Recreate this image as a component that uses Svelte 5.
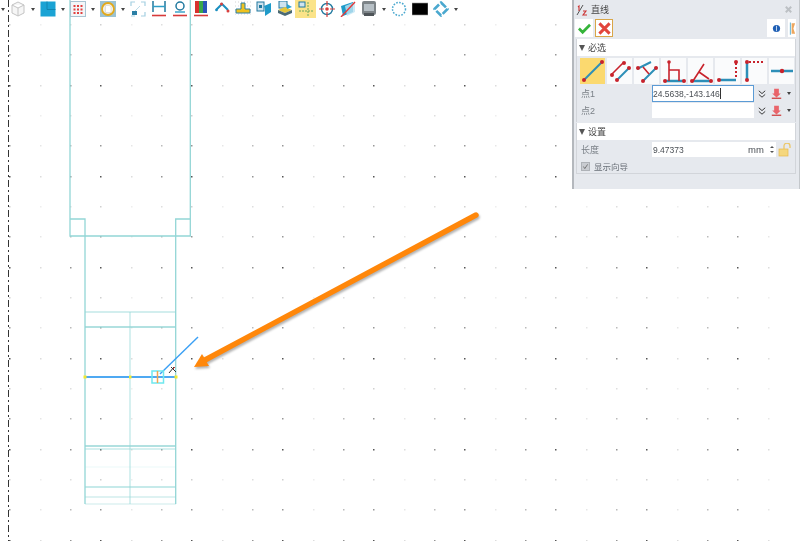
<script>
  // grid of the sketch plane, three dot strengths per row and column
  const STEP = 30.33;
  const dots = [];
  for (let j = 0; j < 18; j++) {
    for (let k = 0; k < 26; k++) {
      const col = [0.75, 0.1, 0.45][k % 3];
      const row = [0.95, 0.2, 0.55][(j + 1) % 3];
      dots.push({ x: Math.round(9.3 + k * STEP), y: Math.round(24 + j * STEP), o: col * row + 0.06 });
    }
  }

  // horizontal rules of the lower body: y, strength
  const rules = [
    [312, 0.55],
    [327, 0.95],
    [446, 0.95],
    [449, 0.5],
    [467, 0.12],
    [487, 0.7],
    [497, 0.4],
    [504, 0.3],
  ];
</script>

{#snippet caret()}
  <span class="caret"></span>
{/snippet}

{#snippet pick()}
  <svg class="pick" viewBox="0 0 14 14">
    <path d="M4 1v6H1.500L7 12l5.500-5H10V1z" fill="#e9656b" />
    <path d="M1 13h12" stroke="#c22" stroke-width="1.400" />
  </svg>
{/snippet}

{#snippet dbl()}
  <svg class="dbl" viewBox="0 0 10 10">
    <path d="M1 1l4 3.500L9 1M1 5.500L5 9l4-3.500" fill="none" stroke="#333" stroke-width="1.200" />
  </svg>
{/snippet}

<div class="screen">
  <svg class="sketch" width="802" height="541" viewBox="0 0 802 541">
    {#each dots as d}
      <rect x={d.x} y={d.y} width="1.500" height="1.500" fill="#222" opacity={d.o} />
    {/each}

    <path d="M8.500 0V541" stroke="#333" stroke-width="1" stroke-dasharray="7 3 2 3" />

    <g fill="none" stroke="#93d6d6" stroke-width="1.300">
      <path d="M70 0V236H190.300V0" />
      <path d="M70 219H85V504M190.300 219H175.700V504" />
    </g>
    <path d="M130 312V504" stroke="#93d6d6" stroke-width="1.500" opacity="0.5" />
    {#each rules as [y, o]}
      <path d="M85 {y}H176" stroke="#93d6d6" stroke-width="1.300" opacity={o} />
    {/each}

    <path d="M85 377H176" stroke="#4fa9f2" stroke-width="2" />
    <path d="M160 374L198 337" stroke="#3aa0f5" stroke-width="1.400" />
    <rect x="152" y="371" width="11.500" height="12" fill="none" stroke="#6fe8ee" stroke-width="1.500" />
    <path d="M157.500 371V383" stroke="#f2a652" stroke-width="1.500" />
    <rect x="83.500" y="375.500" width="3" height="3" fill="#f2ea2e" />
    <rect x="129" y="375.500" width="2.500" height="3" fill="#f2ea2e" />
    <rect x="174.500" y="375.500" width="3" height="3" fill="#f2ea2e" />
    <path d="M169 373L174 367M171 367L176 372" stroke="#333" stroke-width="1" />
    <path d="M173 369L175 367" stroke="#c33" stroke-width="1" />

    <g class="arrow">
      <path d="M476 215L205 360" stroke="#ff870a" stroke-width="5.400" stroke-linecap="round" />
      <path d="M194 367L202 354L209 366Z" fill="#ff870a" />
    </g>
  </svg>

  <div class="toolbar">
    <span class="caret first"></span>
    <span class="tool">
      <svg viewBox="0 0 16 16"><path d="M8 1l6 3v8l-6 3-6-3V4zM2 4l6 3 6-3M8 7v8" fill="#f6f6f6" stroke="#c4c4c4" stroke-width="1" /></svg>
    </span>
    {@render caret()}
    <span class="tool">
      <svg viewBox="0 0 16 16"><rect x="0.500" y="0.500" width="15" height="15" fill="#1ba3d4" /><path d="M7 0.500v8h8.500" fill="none" stroke="#0f7ea8" stroke-width="0.800" /></svg>
    </span>
    {@render caret()}
    <span class="tool">
      <svg viewBox="0 0 16 16">
        <rect x="0.500" y="0.500" width="15" height="15" fill="#f3f6f8" stroke="#a9c4d2" />
        <path d="M3.500 4h2v2h-2zM7 4h2v2H7zM10.500 4h2v2h-2zM3.500 7.500h2v2h-2zM7 7.500h2v2H7zM10.500 7.500h2v2h-2zM3.500 11h2v2h-2zM7 11h2v2H7zM10.500 11h2v2h-2z" fill="#e2403f" />
      </svg>
    </span>
    {@render caret()}
    <span class="tool">
      <svg viewBox="0 0 16 16">
        <rect x="0" y="0" width="16" height="16" fill="#9cc3d3" />
        <circle cx="8" cy="8" r="6" fill="#f3f0e4" stroke="#e2a91c" stroke-width="1.800" />
        <path d="M5.500 4.500h4l1.500 2v5H5.500z" fill="#fff" stroke="#c9c9c9" stroke-width="0.500" />
      </svg>
    </span>
    {@render caret()}
    <span class="tool">
      <svg viewBox="0 0 16 16">
        <path d="M1 5V1h4M11 1h4v4M15 11v4h-4M5 15H1" fill="none" stroke="#a5d0e2" stroke-width="1.200" />
        <rect x="2" y="10" width="5" height="4" fill="#2a7fa5" />
        <path d="M5 10l5-5" stroke="#bcdbe8" stroke-width="1" />
      </svg>
    </span>
    <span class="tool wide">
      <svg viewBox="0 0 16 16">
        <path d="M2 0v11M14 0v11" stroke="#20799f" stroke-width="1.500" />
        <path d="M2 5.500h12" stroke="#2e9ec6" stroke-width="1.500" />
        <path d="M1 14.500h14" stroke="#d73a3a" stroke-width="1.600" />
      </svg>
    </span>
    <span class="tool wide">
      <svg viewBox="0 0 16 16">
        <circle cx="8" cy="5" r="4" fill="none" stroke="#20799f" stroke-width="1.500" />
        <path d="M3 11h10" stroke="#2e9ec6" stroke-width="1.400" />
        <path d="M1 14.500h14" stroke="#d73a3a" stroke-width="1.600" />
      </svg>
    </span>
    <span class="tool wide">
      <svg viewBox="0 0 16 16">
        <rect x="2" y="0" width="4" height="12" fill="#d8322e" />
        <rect x="6" y="0" width="4" height="12" fill="#3aa64a" />
        <rect x="10" y="0" width="4" height="12" fill="#2b54b8" />
        <path d="M1 14.500h14" stroke="#d73a3a" stroke-width="1.600" />
      </svg>
    </span>
    <span class="tool wide">
      <svg viewBox="0 0 16 16">
        <path d="M2 9l6-6 6 6" fill="none" stroke="#1c8fc0" stroke-width="2" />
        <circle cx="7.500" cy="3" r="1.500" fill="#d9403e" />
        <circle cx="2.500" cy="9" r="1.300" fill="#1c8fc0" />
        <circle cx="14" cy="10" r="1.500" fill="#d9403e" />
      </svg>
    </span>
    <span class="tool wide">
      <svg viewBox="0 0 16 16">
        <path d="M0 1h16M0 5h16M0 9h16M0 13h16" stroke="#c9c9c9" stroke-width="0.800" stroke-dasharray="1 2" />
        <path d="M6 2h4v6h5v4H1V8h5z" fill="#efc21f" stroke="#2a7fa5" stroke-width="1" />
      </svg>
    </span>
    <span class="tool wide">
      <svg viewBox="0 0 16 16">
        <rect x="1" y="1" width="7" height="9" fill="#cfe3ee" stroke="#20799f" />
        <path d="M8 5l7-3v9l-6 4V8z" fill="#1f9bc9" />
        <path d="M3 4h3v3H3z" fill="#20799f" />
      </svg>
    </span>
    <span class="tool wide">
      <svg viewBox="0 0 16 16">
        <rect x="2" y="0" width="8" height="7" fill="#cfe3ee" stroke="#20799f" />
        <path d="M1 9l7-3 7 3-7 3z" fill="#e4c63a" />
        <path d="M1 9v3l7 3 7-3V9l-7 3z" fill="#4b6a75" />
        <path d="M10 3l5 3-5 2z" fill="#2aa3d0" />
      </svg>
    </span>
    <span class="tool wide active">
      <svg viewBox="0 0 16 16">
        <rect x="1" y="1" width="6" height="5" fill="#cfe3ee" stroke="#20799f" />
        <path d="M10 1v15M1 10h15" stroke="#6aa860" stroke-width="1" stroke-dasharray="2 1" />
      </svg>
    </span>
    <span class="tool wide">
      <svg viewBox="0 0 16 16">
        <circle cx="8" cy="8" r="5.500" fill="none" stroke="#20799f" stroke-width="1.400" />
        <circle cx="8" cy="8" r="1.800" fill="#d9403e" />
        <path d="M8 0v5M8 11v5M0 8h5M11 8h5" stroke="#d9403e" stroke-width="1.200" />
      </svg>
    </span>
    <span class="tool wide">
      <svg viewBox="0 0 16 16">
        <path d="M1 5l12-4v10L3 15z" fill="#1f9bc9" />
        <path d="M5 5l10-4v10L7 15z" fill="#bfe4f2" opacity="0.800" />
        <path d="M1 16L15 1" stroke="#e23a3a" stroke-width="1.400" />
      </svg>
    </span>
    <span class="tool wide">
      <svg viewBox="0 0 16 16">
        <rect x="1" y="0" width="14" height="14" rx="2" fill="#7d8488" />
        <rect x="3" y="3" width="10" height="7" fill="#b7c0c6" />
        <rect x="3" y="12" width="10" height="3" fill="#4f5559" />
      </svg>
    </span>
    {@render caret()}
    <span class="tool">
      <svg viewBox="0 0 16 16"><circle cx="8" cy="8" r="6.500" fill="none" stroke="#4aa8cf" stroke-width="1.500" stroke-dasharray="1.600 1.400" /></svg>
    </span>
    <span class="tool wide">
      <svg viewBox="0 0 16 16"><rect x="0" y="2" width="16" height="12" fill="#000" stroke="#999" stroke-width="0.600" /></svg>
    </span>
    <span class="tool wide">
      <svg viewBox="0 0 16 16">
        <path d="M8 1.500L14.500 8 8 14.500 1.500 8z" fill="none" stroke="#4aa8cf" stroke-width="2.600" stroke-linejoin="round" stroke-dasharray="7 2" />
      </svg>
    </span>
    {@render caret()}
  </div>

  <aside class="panel">
    <header class="title">
      <svg class="logo" viewBox="0 0 12 12">
        <path d="M1 11L7 1" stroke="#555" stroke-width="1" />
        <path d="M2 3l1-1v5M7 7h3L7 11h4" fill="none" stroke="#c33" stroke-width="1.100" />
      </svg>
      <span class="name">直线</span>
      <svg class="close" viewBox="0 0 10 10">
        <path d="M2 2l6 6M8 2l-6 6" stroke="#bcc0c4" stroke-width="2.200" />
      </svg>
    </header>

    <div class="actions">
      <button class="act">
        <svg viewBox="0 0 14 14"><path d="M1 7l4 4 8-8" fill="none" stroke="#35b43a" stroke-width="3" /></svg>
      </button>
      <button class="act cancel">
        <svg viewBox="0 0 14 14"><path d="M1.500 1.500l11 11M12.500 1.500l-11 11" stroke="#e2453c" stroke-width="3.200" /></svg>
      </button>
      <span class="spacer"></span>
      <button class="act info">
        <svg viewBox="0 0 10 10"><circle cx="5" cy="5" r="4" fill="#1f5fb4" /><path d="M5 2v6" stroke="#cfe0f5" stroke-width="1" /></svg>
      </button>
      <button class="act book">
        <svg viewBox="0 0 8 14"><path d="M1 0h1v14H1z" fill="#4aa8cf" /><path d="M3 1h4l-2 6 2 6H3z" fill="#eda75f" /></svg>
      </button>
    </div>

    <section class="group">
      <h3><i></i>必选</h3>
      <div class="modes">
        <span class="mode on">
          <svg viewBox="0 0 24 24"><path d="M3 21L21 3" stroke="#2d8fb8" stroke-width="2" /><circle cx="3" cy="21" r="2" fill="#c8232c" /><circle cx="21" cy="3" r="2" fill="#c8232c" /></svg>
        </span>
        <span class="mode">
          <svg viewBox="0 0 24 24"><path d="M3 16L15 4" stroke="#c8232c" stroke-width="1.600" /><path d="M9 21L21 9" stroke="#2d8fb8" stroke-width="2" /><circle cx="4" cy="16" r="2" fill="#c8232c" /><circle cx="16" cy="4" r="2" fill="#c8232c" /><circle cx="9" cy="21" r="2" fill="#c8232c" /><circle cx="21" cy="9" r="2" fill="#c8232c" /></svg>
        </span>
        <span class="mode">
          <svg viewBox="0 0 24 24"><path d="M2 10L16 3M8 22L22 8" stroke="#2d8fb8" stroke-width="2" /><path d="M8 8l6 7" stroke="#c8232c" stroke-width="1.600" /><circle cx="8" cy="22" r="2" fill="#c8232c" /><circle cx="21" cy="9" r="2" fill="#c8232c" /><circle cx="3" cy="9" r="2" fill="#c8232c" /></svg>
        </span>
        <span class="mode">
          <svg viewBox="0 0 24 24"><path d="M3 22H22" stroke="#2d8fb8" stroke-width="2.500" /><path d="M7 22V3M7 11H17V22" fill="none" stroke="#c8232c" stroke-width="1.600" /><circle cx="7" cy="3" r="1.800" fill="#c8232c" /><circle cx="3" cy="22" r="2" fill="#c8232c" /><circle cx="22" cy="22" r="2" fill="#c8232c" /></svg>
        </span>
        <span class="mode">
          <svg viewBox="0 0 24 24"><path d="M3 22H22" stroke="#2d8fb8" stroke-width="2.500" /><path d="M4 22L15 5M10 13L20 20" fill="none" stroke="#c8232c" stroke-width="1.600" /><circle cx="3" cy="22" r="2" fill="#c8232c" /><circle cx="22" cy="22" r="2" fill="#c8232c" /></svg>
        </span>
        <span class="mode">
          <svg viewBox="0 0 24 24"><path d="M3 21H20" stroke="#2d8fb8" stroke-width="2.500" /><path d="M20 4V18" stroke="#c8232c" stroke-width="2" stroke-dasharray="2 2" /><circle cx="20" cy="3" r="2" fill="#c8232c" /><circle cx="3" cy="21" r="2" fill="#c8232c" /></svg>
        </span>
        <span class="mode">
          <svg viewBox="0 0 24 24"><path d="M4 21V3" stroke="#2d8fb8" stroke-width="2.500" /><path d="M6 3H22" stroke="#c8232c" stroke-width="2" stroke-dasharray="2 2" /><circle cx="4" cy="21" r="2" fill="#c8232c" /><circle cx="4" cy="3" r="2" fill="#c8232c" /></svg>
        </span>
        <span class="mode">
          <svg viewBox="0 0 24 24"><path d="M1 12H23" stroke="#2d8fb8" stroke-width="2.500" /><circle cx="12" cy="12" r="2.200" fill="#c8232c" /></svg>
        </span>
      </div>

      <div class="field">
        <label for="p1">点1</label>
        <input id="p1" class="focused" value="24.5638,-143.146" />
        {@render dbl()}
        {@render pick()}
        <span class="caret small"></span>
      </div>
      <div class="field">
        <label for="p2">点2</label>
        <input id="p2" value="" />
        {@render dbl()}
        {@render pick()}
        <span class="caret small"></span>
      </div>
    </section>

    <section class="group settings">
      <h3><i></i>设置</h3>
      <div class="field length">
        <label for="len">长度</label>
        <div class="num">
          <input id="len" value="9.47373" />
          <span class="unit">mm</span>
          <span class="spin"><b></b><b></b></span>
        </div>
        <svg class="lock" viewBox="0 0 14 14">
          <rect x="1" y="6" width="9" height="7" fill="#f5d77e" stroke="#e8b94a" stroke-width="0.700" />
          <path d="M6 6V3a3 3 0 0 1 6 0v2" fill="none" stroke="#ecc768" stroke-width="1.300" />
        </svg>
      </div>
      <div class="check">
        <span class="box">
          <svg viewBox="0 0 10 10"><path d="M2 5l2 3 4-6" fill="none" stroke="#666" stroke-width="1.200" /></svg>
        </span>
        <span>显示向导</span>
      </div>
    </section>
  </aside>
</div>

<style>
  :global(body) {
    background: #fff;
  }

  .screen {
    position: relative;
    width: 802px;
    height: 541px;
    overflow: hidden;
    background: #fff;
    font-family: "Liberation Sans", "Noto Sans CJK SC", sans-serif;
    filter: blur(0.35px);
  }

  .sketch {
    position: absolute;
    inset: 0;
    display: block;
  }

  .arrow {
    filter: drop-shadow(1px 2px 1px rgba(0, 0, 0, 0.3));
  }

  /* toolbar floats on the sketch, no background of its own */
  .toolbar {
    position: absolute;
    top: 0;
    left: 0;
    display: flex;
    align-items: flex-start;
    height: 18px;
  }

  .tool {
    width: 20px;
    height: 18px;
    display: flex;
    align-items: center;
    justify-content: center;
  }

  .tool.wide {
    width: 21px;
  }

  .tool.active {
    background: #fbe389;
  }

  .tool svg {
    width: 16px;
    height: 16px;
    display: block;
  }

  .caret {
    width: 10px;
    height: 18px;
    display: flex;
    align-items: center;
    justify-content: center;
  }

  .caret::after {
    content: "";
    border-left: 2.500px solid transparent;
    border-right: 2.500px solid transparent;
    border-top: 3px solid #444;
  }

  .caret.first {
    width: 8px;
    margin-left: -1px;
    margin-right: 1px;
  }

  .panel {
    position: absolute;
    top: 0;
    left: 572px;
    width: 228px;
    height: 189px;
    box-sizing: border-box;
    background: #e6e9ee;
    border-left: 2px solid #b4b8bd;
    border-right: 1px solid #c4c8cc;
    padding: 0 3px 0 2px;
    color: #555d66;
    font-size: 9.500px;
  }

  .title {
    display: flex;
    align-items: center;
    height: 19px;
    gap: 3px;
  }

  .logo {
    width: 12px;
    height: 12px;
  }

  .name {
    font-size: 9px;
    color: #444;
  }

  .close {
    width: 9px;
    height: 9px;
    margin-left: auto;
    margin-right: 3px;
  }

  .actions {
    display: flex;
    height: 19px;
    gap: 2px;
    margin: 0 -1px;
  }

  .spacer {
    flex: 1;
  }

  .act {
    width: 18px;
    height: 18px;
    padding: 0;
    border: 0;
    background: #fff;
    display: flex;
    align-items: center;
    justify-content: center;
  }

  .act svg {
    width: 13px;
    height: 13px;
  }

  .act.cancel {
    box-shadow: inset 0 0 0 1px #d9a648;
  }

  .act.info {
    margin-right: 1px;
  }

  .act.info svg {
    width: 9px;
    height: 9px;
  }

  .act.book {
    width: 8px;
    margin-right: 1px;
  }

  .act.book svg {
    width: 7px;
    height: 13px;
  }

  .group {
    margin-top: 1px;
    padding-bottom: 3px;
    border-left: 1px solid #d2d5da;
    border-right: 1px solid #d2d5da;
  }

  .group h3 {
    margin: 0;
    height: 17px;
    display: flex;
    align-items: center;
    gap: 3px;
    padding-left: 2px;
    background: #fff;
    font-size: 9px;
    font-weight: normal;
    color: #444;
  }

  .group h3 i {
    border-left: 3.500px solid transparent;
    border-right: 3.500px solid transparent;
    border-top: 6px solid #555;
  }

  .modes {
    display: flex;
    gap: 2px;
    margin: 2px 0 1px 3px;
  }

  .mode {
    width: 25px;
    height: 26px;
    background: #fafbfc;
    display: flex;
    align-items: center;
    justify-content: center;
  }

  .mode.on {
    background: #fbd96f;
  }

  .mode svg {
    width: 24px;
    height: 24px;
  }

  .field {
    display: flex;
    align-items: center;
    height: 17px;
    padding-left: 4px;
  }

  .field label {
    width: 71px;
    flex: none;
    font-size: 9px;
    color: #7a8087;
  }

  .field input {
    width: 102px;
    height: 15px;
    box-sizing: border-box;
    flex: none;
    margin: 0;
    padding: 0 1px;
    border: 0;
    background: #fff;
    font: 8.500px "Liberation Sans", sans-serif;
    color: #4a4f55;
    outline: none;
  }

  /* the text cursor stays visible in the focused field */
  .field input.focused {
    height: 17px;
    padding: 0;
    border: 1px solid #5b9bd5;
    background: linear-gradient(#333, #333) 67px 2px / 1px 11px no-repeat #fff;
  }

  .dbl {
    width: 8px;
    height: 8px;
    margin-left: 4px;
  }

  .pick {
    width: 11px;
    height: 11px;
    margin-left: 5px;
  }

  .caret.small {
    width: 8px;
    height: 10px;
    margin-left: 3px;
  }

  .settings {
    margin-top: 1px;
    padding-bottom: 0;
    height: 51px;
    box-sizing: border-box;
    border-bottom: 1px solid #d2d5da;
  }

  .length {
    margin-top: 2px;
    height: 15px;
  }

  .num {
    display: flex;
    align-items: center;
    width: 124px;
    height: 15px;
    flex: none;
    background: #fff;
  }

  .num input {
    width: 96px;
    height: 15px;
  }

  .unit {
    width: 22px;
    flex: none;
    color: #4a4f55;
    font-size: 9.500px;
  }

  .spin {
    display: flex;
    flex-direction: column;
    gap: 3px;
  }

  .spin b {
    border-left: 2px solid transparent;
    border-right: 2px solid transparent;
    border-bottom: 2.500px solid #555;
  }

  .spin b:last-child {
    border-bottom: 0;
    border-top: 2.500px solid #555;
  }

  .lock {
    width: 14px;
    height: 14px;
    margin-left: 2px;
  }

  .check {
    display: flex;
    align-items: center;
    gap: 4px;
    padding-left: 4px;
    margin-top: 2px;
    height: 14px;
    font-size: 8.500px;
    color: #6a7078;
  }

  .box {
    width: 9px;
    height: 9px;
    box-sizing: border-box;
    background: #c9ccd1;
    border: 1px solid #aeb2b7;
    display: flex;
  }
</style>
